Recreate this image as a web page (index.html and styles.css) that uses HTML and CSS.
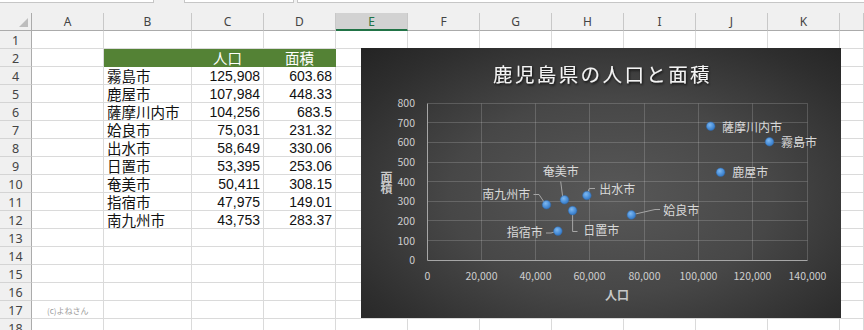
FILE: index.html
```html
<!DOCTYPE html>
<html lang="ja">
<head>
<meta charset="utf-8">
<title>鹿児島県の人口と面積</title>
<link rel="stylesheet" href="styles.css">
</head>
<body>
<div class="topbar">
  <div class="box box1"></div>
  <div class="box box2"></div>
  <div class="box box3"></div>
</div>
<div class="grid">
  <div class="ch corner"><div class="tri"></div></div>
  <div class="ch">A</div><div class="ch">B</div><div class="ch">C</div><div class="ch">D</div><div class="ch sel">E</div><div class="ch">F</div><div class="ch">G</div><div class="ch">H</div><div class="ch">I</div><div class="ch">J</div><div class="ch">K</div><div class="ch"></div>

  <div class="rh">1</div><div class="c"></div><div class="c"></div><div class="c"></div><div class="c"></div><div class="c"></div><div class="c"></div><div class="c"></div><div class="c"></div><div class="c"></div><div class="c"></div><div class="c"></div><div class="c"></div>

  <div class="rh">2</div><div class="c"></div><div class="c hd"></div><div class="c hd ctr">人口</div><div class="c hd ctr">面積</div><div class="c"></div><div class="c"></div><div class="c"></div><div class="c"></div><div class="c"></div><div class="c"></div><div class="c"></div><div class="c"></div>

  <div class="rh">4</div><div class="c"></div><div class="c">霧島市</div><div class="c num">125,908</div><div class="c num">603.68</div><div class="c"></div><div class="c"></div><div class="c"></div><div class="c"></div><div class="c"></div><div class="c"></div><div class="c"></div><div class="c"></div>

  <div class="rh">5</div><div class="c"></div><div class="c">鹿屋市</div><div class="c num">107,984</div><div class="c num">448.33</div><div class="c"></div><div class="c"></div><div class="c"></div><div class="c"></div><div class="c"></div><div class="c"></div><div class="c"></div><div class="c"></div>

  <div class="rh">6</div><div class="c"></div><div class="c">薩摩川内市</div><div class="c num">104,256</div><div class="c num">683.5</div><div class="c"></div><div class="c"></div><div class="c"></div><div class="c"></div><div class="c"></div><div class="c"></div><div class="c"></div><div class="c"></div>

  <div class="rh">7</div><div class="c"></div><div class="c">姶良市</div><div class="c num">75,031</div><div class="c num">231.32</div><div class="c"></div><div class="c"></div><div class="c"></div><div class="c"></div><div class="c"></div><div class="c"></div><div class="c"></div><div class="c"></div>

  <div class="rh">8</div><div class="c"></div><div class="c">出水市</div><div class="c num">58,649</div><div class="c num">330.06</div><div class="c"></div><div class="c"></div><div class="c"></div><div class="c"></div><div class="c"></div><div class="c"></div><div class="c"></div><div class="c"></div>

  <div class="rh">9</div><div class="c"></div><div class="c">日置市</div><div class="c num">53,395</div><div class="c num">253.06</div><div class="c"></div><div class="c"></div><div class="c"></div><div class="c"></div><div class="c"></div><div class="c"></div><div class="c"></div><div class="c"></div>

  <div class="rh">10</div><div class="c"></div><div class="c">奄美市</div><div class="c num">50,411</div><div class="c num">308.15</div><div class="c"></div><div class="c"></div><div class="c"></div><div class="c"></div><div class="c"></div><div class="c"></div><div class="c"></div><div class="c"></div>

  <div class="rh">11</div><div class="c"></div><div class="c">指宿市</div><div class="c num">47,975</div><div class="c num">149.01</div><div class="c"></div><div class="c"></div><div class="c"></div><div class="c"></div><div class="c"></div><div class="c"></div><div class="c"></div><div class="c"></div>

  <div class="rh">12</div><div class="c"></div><div class="c">南九州市</div><div class="c num">43,753</div><div class="c num">283.37</div><div class="c"></div><div class="c"></div><div class="c"></div><div class="c"></div><div class="c"></div><div class="c"></div><div class="c"></div><div class="c"></div>

  <div class="rh">13</div><div class="c"></div><div class="c"></div><div class="c"></div><div class="c"></div><div class="c"></div><div class="c"></div><div class="c"></div><div class="c"></div><div class="c"></div><div class="c"></div><div class="c"></div><div class="c"></div>

  <div class="rh">14</div><div class="c"></div><div class="c"></div><div class="c"></div><div class="c"></div><div class="c"></div><div class="c"></div><div class="c"></div><div class="c"></div><div class="c"></div><div class="c"></div><div class="c"></div><div class="c"></div>

  <div class="rh">15</div><div class="c"></div><div class="c"></div><div class="c"></div><div class="c"></div><div class="c"></div><div class="c"></div><div class="c"></div><div class="c"></div><div class="c"></div><div class="c"></div><div class="c"></div><div class="c"></div>

  <div class="rh">16</div><div class="c"></div><div class="c"></div><div class="c"></div><div class="c"></div><div class="c"></div><div class="c"></div><div class="c"></div><div class="c"></div><div class="c"></div><div class="c"></div><div class="c"></div><div class="c"></div>

  <div class="rh">17</div><div class="c credit">(c)よねさん</div><div class="c"></div><div class="c"></div><div class="c"></div><div class="c"></div><div class="c"></div><div class="c"></div><div class="c"></div><div class="c"></div><div class="c"></div><div class="c"></div><div class="c"></div>

  <div class="rh">18</div><div class="c"></div><div class="c"></div><div class="c"></div><div class="c"></div><div class="c"></div><div class="c"></div><div class="c"></div><div class="c"></div><div class="c"></div><div class="c"></div><div class="c"></div><div class="c"></div>
</div>

<div class="chart">
  <svg class="plot" width="480" height="270" viewBox="0 0 480 270">
    <defs>
      <radialGradient id="dot" cx="40%" cy="35%" r="70%">
        <stop offset="0" stop-color="#7fb8ef"/>
        <stop offset="0.6" stop-color="#4a8fd9"/>
        <stop offset="1" stop-color="#3474bd"/>
      </radialGradient>
      <filter id="tsh" x="-5%" y="-20%" width="110%" height="150%">
        <feDropShadow dx="1" dy="1.5" stdDeviation="0.8" flood-color="#000" flood-opacity="0.75"/>
      </filter>
    </defs>
    <text class="title" x="132" y="33.5" filter="url(#tsh)">鹿児島県の人口と面積</text>

    <g class="gridlines">
      <line x1="66.5" y1="55.5" x2="446.5" y2="55.5"/>
      <line x1="66.5" y1="74.5" x2="446.5" y2="74.5"/>
      <line x1="66.5" y1="94.5" x2="446.5" y2="94.5"/>
      <line x1="66.5" y1="114.5" x2="446.5" y2="114.5"/>
      <line x1="66.5" y1="133.5" x2="446.5" y2="133.5"/>
      <line x1="66.5" y1="153.5" x2="446.5" y2="153.5"/>
      <line x1="66.5" y1="172.5" x2="446.5" y2="172.5"/>
      <line x1="66.5" y1="192.5" x2="446.5" y2="192.5"/>
      <line x1="120.5" y1="55.5" x2="120.5" y2="212.5"/>
      <line x1="174.5" y1="55.5" x2="174.5" y2="212.5"/>
      <line x1="228.5" y1="55.5" x2="228.5" y2="212.5"/>
      <line x1="283.5" y1="55.5" x2="283.5" y2="212.5"/>
      <line x1="337.5" y1="55.5" x2="337.5" y2="212.5"/>
      <line x1="391.5" y1="55.5" x2="391.5" y2="212.5"/>
      <line x1="446.5" y1="55.5" x2="446.5" y2="212.5"/>
    </g>
    <g class="axes">
      <line x1="66.5" y1="55.5" x2="66.5" y2="212.5"/>
      <line x1="66.5" y1="212.5" x2="446.5" y2="212.5"/>
    </g>

    <g class="ylab">
      <text x="54" y="59">800</text>
      <text x="54" y="78.5">700</text>
      <text x="54" y="98">600</text>
      <text x="54" y="118">500</text>
      <text x="54" y="137.5">400</text>
      <text x="54" y="157">300</text>
      <text x="54" y="176.5">200</text>
      <text x="54" y="196.5">100</text>
      <text x="54" y="216">0</text>
    </g>
    <g class="xlab">
      <text x="66.5" y="232">0</text>
      <text x="120.5" y="232">20,000</text>
      <text x="174.5" y="232">40,000</text>
      <text x="228.5" y="232">60,000</text>
      <text x="283.5" y="232">80,000</text>
      <text x="337.5" y="232">100,000</text>
      <text x="391.5" y="232">120,000</text>
      <text x="446.5" y="232">140,000</text>
    </g>
    <text class="atitle" x="256" y="251.5">人口</text>
    <text class="vtitle" x="25.5" y="134">面積</text>

    <g class="leaders">
      <polyline points="270.4,166.9 294,161.5 299,161.5"/>
      <polyline points="226.5,145 228.3,140.5 234,140.5"/>
      <polyline points="211.6,165 211.6,183.5 216.5,183.5"/>
      <polyline points="199.7,133.5 201.7,149"/>
      <polyline points="172.5,146.5 178,146.5 183,154"/>
      <polyline points="185,185 190,185 195,183.5"/>
    </g>

    <g class="dots">
      <circle cx="408.5" cy="93.8" r="4.3"/>
      <circle cx="359.6" cy="124.3" r="4.3"/>
      <circle cx="349.7" cy="78.2" r="4.3"/>
      <circle cx="270.4" cy="166.9" r="4.3"/>
      <circle cx="225.9" cy="147.5" r="4.3"/>
      <circle cx="211.6" cy="162.6" r="4.3"/>
      <circle cx="203.5" cy="151.8" r="4.3"/>
      <circle cx="196.9" cy="183.1" r="4.3"/>
      <circle cx="185.5" cy="156.7" r="4.3"/>
    </g>

    <g class="dlab">
      <text x="361" y="83.6">薩摩川内市</text>
      <text x="420" y="99.3">霧島市</text>
      <text x="371.3" y="129.3">鹿屋市</text>
      <text x="302.3" y="166.6">姶良市</text>
      <text x="238.3" y="145.6">出水市</text>
      <text x="222.3" y="186.6">日置市</text>
      <text x="181.7" y="128.3">奄美市</text>
      <text x="121.3" y="150.9">南九州市</text>
      <text x="145.7" y="189.3">指宿市</text>
    </g>
  </svg>
</div>
</body>
</html>
```
FILE: styles.css
```css
* {
  box-sizing: border-box;
  margin: 0;
  padding: 0;
}

html, body {
  width: 864px;
  height: 330px;
  overflow: hidden;
  background: #ffffff;
}

body {
  position: relative;
  font-family: "Noto Sans CJK JP", "Noto Sans", sans-serif;
}

/* top strip (bottom of name box / formula bar) */
.topbar {
  height: 13px;
  background: #f0f0f0;
  display: flex;
  align-items: flex-start;
}

.box {
  height: 3px;
  background: #ffffff;
  border: 1px solid #c6c6c6;
  border-top: none;
}

.box1 {
  width: 154px;
  border-left: none;
}

.box2 {
  width: 110px;
  margin-left: 30px;
}

.box3 {
  flex: 1;
  margin-left: 3px;
  border-right: none;
}

/* sheet grid */
.grid {
  display: grid;
  grid-template-columns: 32px 72px 88px 72px 72px 72px 72px 72px 72px 72px 72px 72px 24px;
  grid-auto-rows: 18px;
}

.c {
  border-right: 1px solid #dadada;
  border-bottom: 1px solid #dadada;
  font-size: 14.5px;
  line-height: 17px;
  color: #111111;
  white-space: nowrap;
  padding: 0 3px;
}

.num {
  font-family: "Liberation Sans", Arial, sans-serif;
  font-size: 14px;
  line-height: 18px;
  text-align: right;
  padding-right: 3px;
}

.ctr {
  text-align: center;
}

.hd {
  background: #548235;
  color: #ffffff;
  border-right-color: #548235;
  border-bottom-color: #548235;
}

.credit {
  font-size: 8px;
  color: #9a9a9a;
  padding-left: 15px;
  line-height: 17px;
  padding-top: 1px;
}

.ch {
  background: #f0f0f0;
  border-right: 1px solid #c8c8c8;
  border-bottom: 1px solid #ababab;
  font-family: "Noto Sans", sans-serif;
  font-size: 12px;
  color: #444444;
  display: flex;
  align-items: center;
  justify-content: center;
}

.ch.sel {
  background: #d2d2d2;
  color: #217346;
  border-bottom: 2px solid #217346;
}

.corner {
  justify-content: flex-end;
  align-items: flex-end;
  padding: 0 3px 3px 0;
  border-right-color: #ababab;
}

.tri {
  width: 9px;
  height: 9px;
  background: #bdbdbd;
  clip-path: polygon(100% 0, 100% 100%, 0 100%);
}

.rh {
  background: #f0f0f0;
  border-right: 1px solid #ababab;
  border-bottom: 1px solid #d4d4d4;
  font-family: "Noto Sans", sans-serif;
  font-size: 12.5px;
  line-height: 17px;
  padding-top: 1px;
  color: #444444;
  text-align: center;
}

/* chart object floating over the sheet */
.chart {
  position: absolute;
  left: 361px;
  top: 48px;
  width: 480px;
  height: 270px;
  background: radial-gradient(ellipse 75% 80% at 52% 55%, #585858 0%, #474747 45%, #2e2e2e 80%, #222222 100%);
}

.plot {
  display: block;
}

.plot text {
  font-family: "Noto Sans CJK JP", "Noto Sans", sans-serif;
}

.plot .title {
  font-size: 19.5px;
  letter-spacing: 2.4px;
  fill: #f4f4f4;
}

.gridlines line {
  stroke: #ffffff;
  stroke-opacity: 0.17;
  stroke-width: 1;
}

.axes line {
  stroke: #a6a6a6;
  stroke-width: 1;
}

.plot .ylab text {
  font-size: 10.5px;
  fill: #cfcfcf;
  text-anchor: end;
}

.plot .xlab text {
  font-size: 10.5px;
  fill: #cfcfcf;
  text-anchor: middle;
}

.plot .atitle {
  font-size: 12px;
  font-weight: 700;
  fill: #c8c8c8;
  text-anchor: middle;
}

.plot .vtitle {
  font-size: 12px;
  font-weight: 700;
  fill: #c8c8c8;
  writing-mode: vertical-rl;
  text-anchor: middle;
  letter-spacing: -1.5px;
}

.leaders polyline {
  fill: none;
  stroke: #a6a6a6;
  stroke-width: 1;
}

.dots circle {
  fill: url(#dot);
  stroke: #2f6aae;
  stroke-width: 0.5;
}

.plot .dlab text {
  font-size: 12px;
  fill: #d9d9d9;
}
```
